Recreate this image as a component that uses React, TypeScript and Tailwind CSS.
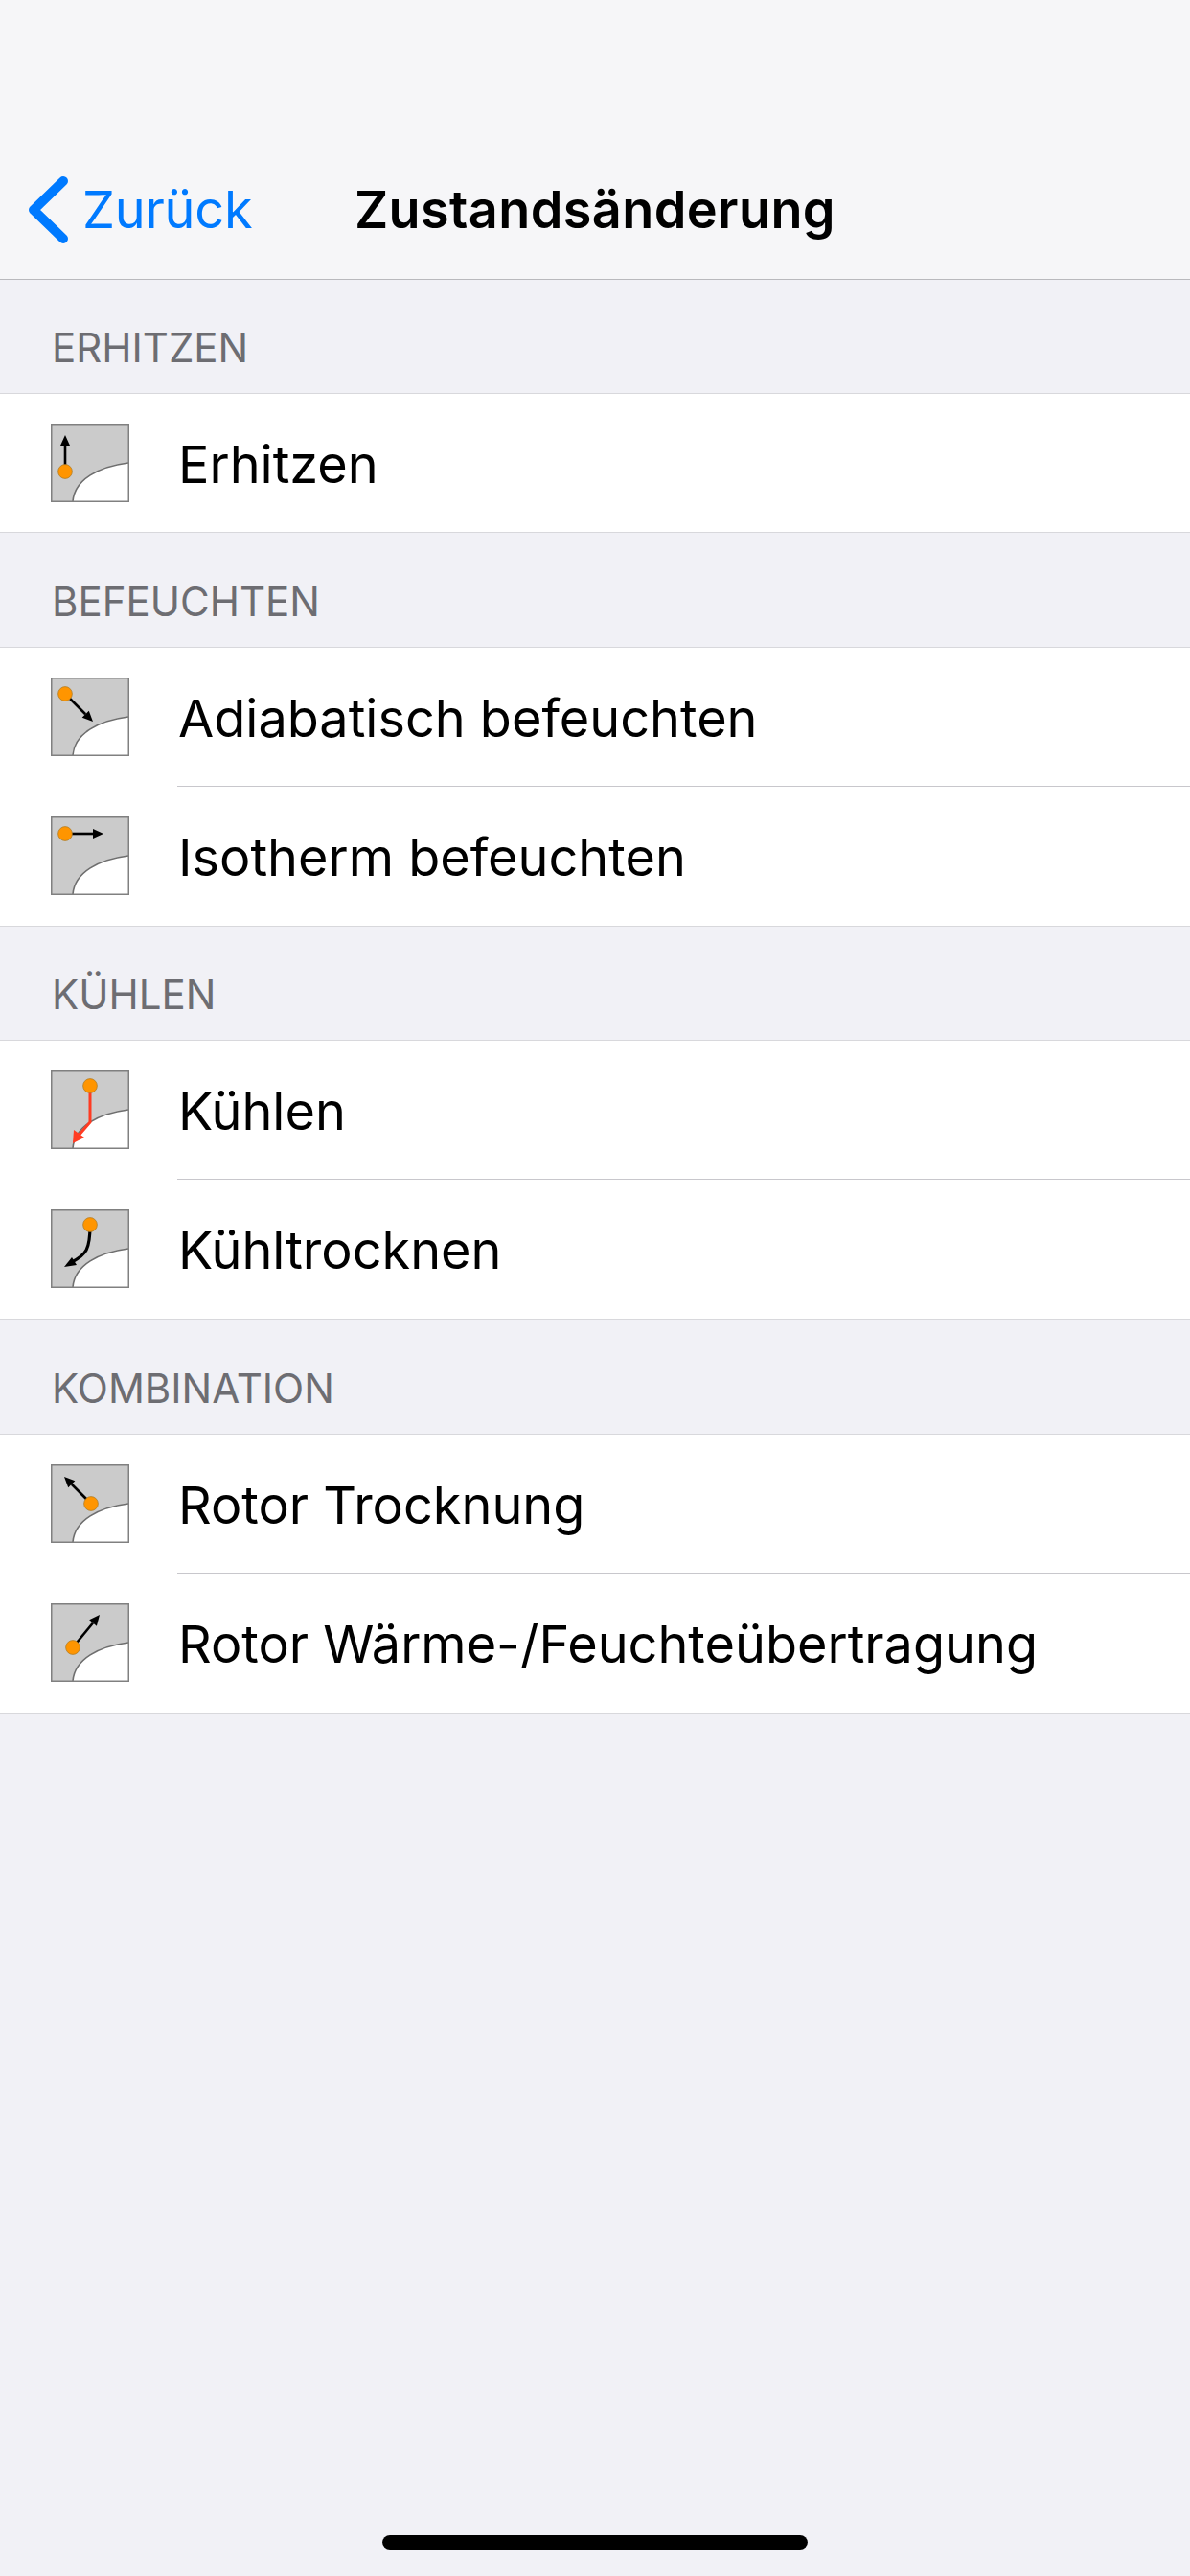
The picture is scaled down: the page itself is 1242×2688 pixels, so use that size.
const FONT = 'font-["Inter","Liberation_Sans",sans-serif]';

type IconKind = "up" | "adiabatic" | "isotherm" | "cool" | "dry" | "rotorDry" | "rotorHeat";

function Arrow({ x1, y1, x2, y2, color = "#000" }: { x1: number; y1: number; x2: number; y2: number; color?: string }) {
  const a = Math.atan2(y2 - y1, x2 - x1);
  const len = 11;
  const w = 5;
  const bx = x2 - len * Math.cos(a);
  const by = y2 - len * Math.sin(a);
  const px = -Math.sin(a) * w;
  const py = Math.cos(a) * w;
  return (
    <g>
      <line x1={x1} y1={y1} x2={bx} y2={by} stroke={color} strokeWidth="2.6" />
      <polygon points={`${x2},${y2} ${bx + px},${by + py} ${bx - px},${by - py}`} fill={color} />
    </g>
  );
}

function Dot({ x, y }: { x: number; y: number }) {
  return <circle cx={x} cy={y} r="7.4" fill="#ff9500" stroke="#a87a28" strokeWidth="0.7" />;
}

function StateIcon({ kind }: { kind: IconKind }) {
  return (
    <svg viewBox="0 0 82 82" className="block h-[82px] w-[82px] shrink-0">
      <rect x="0.75" y="0.75" width="80.5" height="80.5" fill="#cbcbcb" />
      <path d="M23 81 C25 58 50 45 81 41 L81 81 Z" fill="#fff" />
      <path d="M23 81 C25 58 50 45 81 41" fill="none" stroke="#6e6e6e" strokeWidth="1.6" />
      <rect x="0.75" y="0.75" width="80.5" height="80.5" fill="none" stroke="#808080" strokeWidth="1.5" />
      {kind === "up" && (
        <>
          <Arrow x1={15} y1={50} x2={15} y2={12} />
          <Dot x={15} y={50} />
        </>
      )}
      {kind === "adiabatic" && (
        <>
          <Arrow x1={15} y1={17} x2={44} y2={46} />
          <Dot x={15} y={17} />
        </>
      )}
      {kind === "isotherm" && (
        <>
          <Arrow x1={15} y1={18} x2={55} y2={18} />
          <Dot x={15} y={18} />
        </>
      )}
      {kind === "cool" && (
        <>
          <path d="M41 16 L41 54 L28 69" fill="none" stroke="#ff3b22" strokeWidth="3" />
          <polygon points="23,76 24,62 35,70" fill="#ff3b22" />
          <Dot x={41} y={16} />
        </>
      )}
      {kind === "dry" && (
        <>
          <path d="M41 16 C41 42 37 47 22 55" fill="none" stroke="#000" strokeWidth="3.2" />
          <polygon points="14,60 22,50 27,58" fill="#000" />
          <Dot x={41} y={16} />
        </>
      )}
      {kind === "rotorDry" && (
        <>
          <Arrow x1={42} y1={41} x2={14} y2={13} />
          <Dot x={42} y={41} />
        </>
      )}
      {kind === "rotorHeat" && (
        <>
          <Arrow x1={23} y1={46} x2={51} y2={12} />
          <Dot x={23} y={46} />
        </>
      )}
    </svg>
  );
}

const sections: { title: string; headerH: string; rows: { label: string; icon: IconKind }[] }[] = [
  { title: "ERHITZEN", headerH: "h-[118px]", rows: [{ label: "Erhitzen", icon: "up" }] },
  {
    title: "BEFEUCHTEN",
    headerH: "h-[119px]",
    rows: [
      { label: "Adiabatisch befeuchten", icon: "adiabatic" },
      { label: "Isotherm befeuchten", icon: "isotherm" },
    ],
  },
  {
    title: "KÜHLEN",
    headerH: "h-[118px]",
    rows: [
      { label: "Kühlen", icon: "cool" },
      { label: "Kühltrocknen", icon: "dry" },
    ],
  },
  {
    title: "KOMBINATION",
    headerH: "h-[119px]",
    rows: [
      { label: "Rotor Trocknung", icon: "rotorDry" },
      { label: "Rotor Wärme-/Feuchteübertragung", icon: "rotorHeat" },
    ],
  },
];

export default function App() {
  return (
    <div className={`${FONT} flex h-[2688px] w-[1242px] flex-col overflow-hidden bg-[#f1f1f6] text-black`}>
      {/* nav bar */}
      <div className="grid h-[292px] grid-cols-[1fr_auto_1fr] items-center border-b border-[#b9b9bd] bg-[#f6f6f8] pt-[147px]">
        <div className="flex items-center pl-[27px]">
          <svg viewBox="0 0 46 72" className="h-[72px] w-[46px]">
            <path d="M39 6 L8 36 L39 66" fill="none" stroke="#007aff" strokeWidth="10" strokeLinecap="round" strokeLinejoin="round" />
          </svg>
          <span className="ml-[13px] text-[54px] leading-[60px] tracking-[-0.2px] text-[#007aff]">Zurück</span>
        </div>
        <div className="text-[54px] leading-[60px] font-semibold tracking-[0.4px]">Zustandsänderung</div>
        <div />
      </div>

      {sections.map((s) => (
        <div key={s.title}>
          <div className={`${s.headerH} flex items-end pb-[24px] pl-[54px] text-[42px] leading-[47px] text-[#6d6d72]`}>{s.title}</div>
          <div className="border-y border-[#d8d8dc] bg-white">
            {s.rows.map((r, i) => (
              <div key={r.label} className={`flex items-center pl-[53px] ${i > 0 ? "h-[146px]" : "h-[144px]"}`}>
                <StateIcon kind={r.icon} />
                <div className={`ml-[50px] flex h-full flex-1 items-center pt-[2px] pl-[1px] text-[54px] ${i > 0 ? "border-t border-[#c8c7cc]" : ""}`}>
                  {r.label}
                </div>
              </div>
            ))}
          </div>
        </div>
      ))}

      {/* home indicator */}
      <div className="mt-auto mb-[27px] flex justify-center">
        <div className="h-[16px] w-[444px] rounded-full bg-black" />
      </div>
    </div>
  );
}
